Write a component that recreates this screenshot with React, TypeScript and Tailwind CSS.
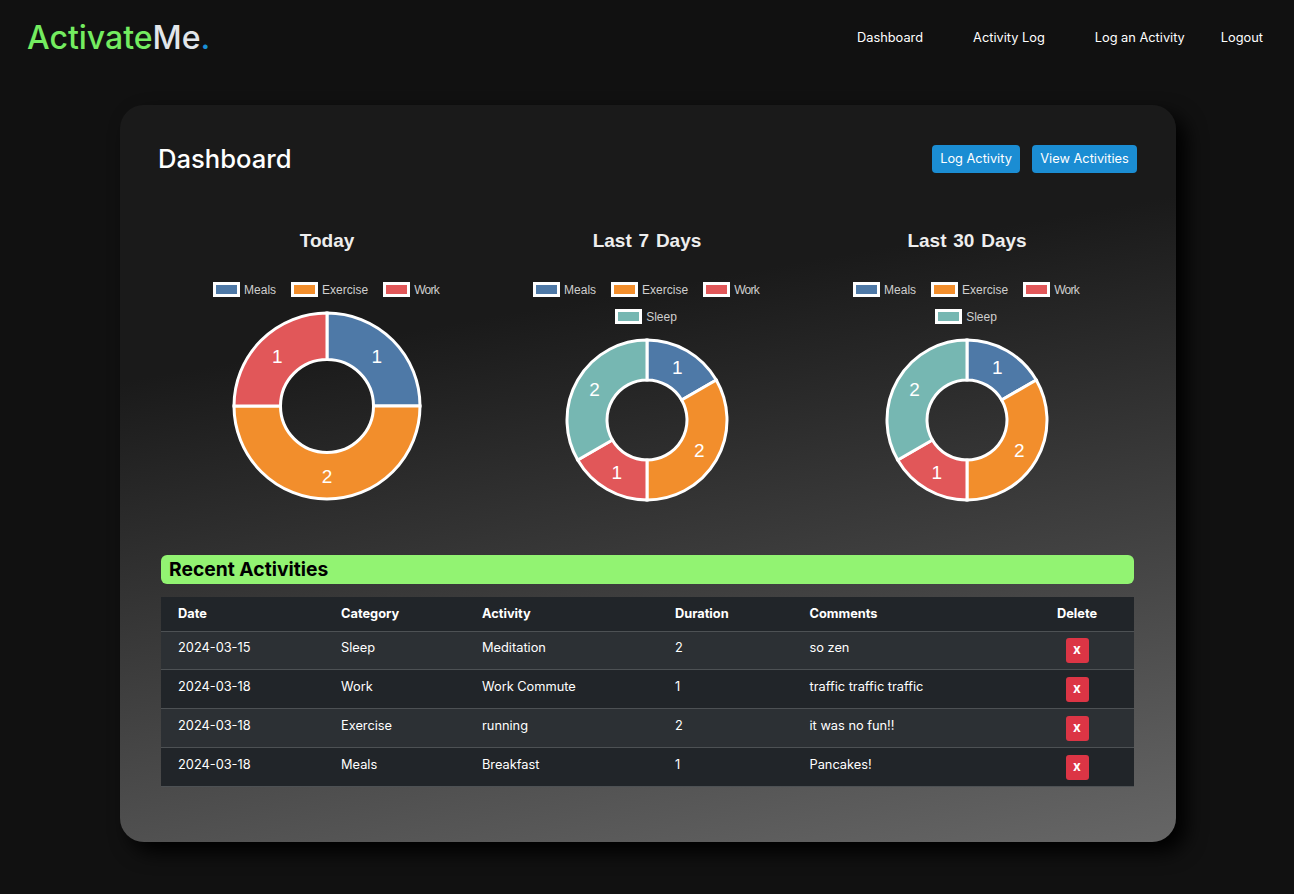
import React from 'react'

const colors: Record<string, string> = {
  Meals: '#4e79a7',
  Exercise: '#f28e2c',
  Work: '#e15759',
  Sleep: '#76b7b2',
}

type Slice = { name: string; value: number }

const charts: { title: string; size: number; slices: Slice[] }[] = [
  {
    title: 'Today',
    size: 190,
    slices: [
      { name: 'Meals', value: 1 },
      { name: 'Exercise', value: 2 },
      { name: 'Work', value: 1 },
    ],
  },
  {
    title: 'Last 7 Days',
    size: 164,
    slices: [
      { name: 'Meals', value: 1 },
      { name: 'Exercise', value: 2 },
      { name: 'Work', value: 1 },
      { name: 'Sleep', value: 2 },
    ],
  },
  {
    title: 'Last 30 Days',
    size: 164,
    slices: [
      { name: 'Meals', value: 1 },
      { name: 'Exercise', value: 2 },
      { name: 'Work', value: 1 },
      { name: 'Sleep', value: 2 },
    ],
  },
]

const rows = [
  { date: '2024-03-15', category: 'Sleep', activity: 'Meditation', duration: 2, comments: 'so zen' },
  { date: '2024-03-18', category: 'Work', activity: 'Work Commute', duration: 1, comments: 'traffic traffic traffic' },
  { date: '2024-03-18', category: 'Exercise', activity: 'running', duration: 2, comments: 'it was no fun!!' },
  { date: '2024-03-18', category: 'Meals', activity: 'Breakfast', duration: 1, comments: 'Pancakes!' },
]

function Donut({ size, slices }: { size: number; slices: Slice[] }) {
  const c = size / 2
  const outer = c - 2
  const inner = outer / 2
  const mid = (outer + inner) / 2 + 0.5
  const total = slices.reduce((sum, s) => sum + s.value, 0)
  const pt = (r: number, a: number) => [c + r * Math.sin(a), c - r * Math.cos(a)]
  let angle = 0

  return (
    <svg width={size} height={size} viewBox={`0 0 ${size} ${size}`}>
      {slices.map((s) => {
        const start = angle
        const end = angle + (s.value / total) * Math.PI * 2
        angle = end
        const large = end - start > Math.PI ? 1 : 0
        const [x1, y1] = pt(outer, start)
        const [x2, y2] = pt(outer, end)
        const [x3, y3] = pt(inner, end)
        const [x4, y4] = pt(inner, start)
        const [tx, ty] = pt(mid, (start + end) / 2)
        return (
          <g key={s.name}>
            <path
              d={`M${x1} ${y1}A${outer} ${outer} 0 ${large} 1 ${x2} ${y2}L${x3} ${y3}A${inner} ${inner} 0 ${large} 0 ${x4} ${y4}Z`}
              fill={colors[s.name]}
              stroke="#fff"
              strokeWidth={3}
            />
            <text x={tx} y={ty + 6.5} textAnchor="middle" fill="#fff" fontSize={19} fontFamily="Liberation Sans, Arial, sans-serif">
              {s.value}
            </text>
          </g>
        )
      })}
    </svg>
  )
}

function Legend({ slices }: { slices: Slice[] }) {
  return (
    <div className="flex flex-wrap justify-center gap-x-[15px] gap-y-3 w-[280px] mr-[2px]">
      {slices.map((s) => (
        <div key={s.name} className="flex items-center gap-1 h-[15px]">
          <svg width={27} height={15}>
            <rect x={1.5} y={1.5} width={24} height={12} fill={colors[s.name]} stroke="#fff" strokeWidth={3} />
          </svg>
          <span className={`text-xs leading-none text-[#cfcfcf] ${s.name === 'Work' ? 'tracking-[-0.75px]' : ''}`}>{s.name}</span>
        </div>
      ))}
    </div>
  )
}

export default function App() {
  return (
    <div className="min-h-screen bg-[#111111] font-['Inter',sans-serif] text-white">
      {/* Navbar */}
      <nav className="flex items-center justify-between h-[75px] pl-[27px] pr-[31px]">
        <div className="text-[32px] leading-none font-medium">
          <span className="text-[#74ec60]">Activate</span>
          <span className="text-[#e2e6ea]">Me</span>
          <span className="text-[#1a8fd6]">.</span>
        </div>
        <div className="flex items-center text-[12.8px]">
          <a className="mr-[50px]">Dashboard</a>
          <a className="mr-[50px]">Activity Log</a>
          <a className="mr-[36px]">Log an Activity</a>
          <a>Logout</a>
        </div>
      </nav>

      {/* Main card */}
      <main className="ml-[120px] mr-[118px] mt-[30px] h-[737px] rounded-3xl bg-[linear-gradient(170deg,#1a1a1a_30%,#666666_100%)] shadow-[10px_10px_20px_#000000] px-[38px] pt-10">
        <div className="flex items-center justify-between h-7">
          <h1 className="text-[25.6px] leading-7 font-medium">Dashboard</h1>
          <div className="flex gap-3 mr-px">
            <button className="w-[88px] h-7 rounded bg-[#1b8dd3] text-[12.8px]">Log Activity</button>
            <button className="w-[105px] h-7 rounded bg-[#1b8dd3] text-[12.8px]">View Activities</button>
          </div>
        </div>

        {/* Charts */}
        <div className="grid grid-cols-3 w-[960px] ml-[9px] mt-[55px] h-[297px] font-['Liberation_Sans',Arial,sans-serif]">
          {charts.map((chart) => (
            <div key={chart.title} className="flex flex-col items-center">
              <h2 className="text-[19px] leading-6 mt-px [word-spacing:1.5px] font-bold text-[#eeeeee]">{chart.title}</h2>
              <div className="mt-[29px]">
                <Legend slices={chart.slices} />
              </div>
              <div className="mt-[14px]">
                <Donut size={chart.size} slices={chart.slices} />
              </div>
            </div>
          ))}
        </div>

        {/* Recent activities */}
        <div className="ml-[3px] mr-[4px] mt-[30px]">
          <h2 className="h-[29px] rounded-md bg-[#92f372] pl-2 text-[19.3px] leading-[29px] font-bold text-black">Recent Activities</h2>
          <table className="w-full mt-[13px] table-fixed border-collapse text-[12.8px] text-left">
            <thead>
              <tr className="h-[34px] bg-[#212529] border-b border-[#4d5154]">
                <th className="w-[163px] pl-[17px] font-bold">Date</th>
                <th className="w-[141px] pl-[17px] font-bold">Category</th>
                <th className="w-[193px] pl-[17px] font-bold">Activity</th>
                <th className="w-[134.5px] pl-[17px] font-bold">Duration</th>
                <th className="w-[228.5px] pl-[17px] font-bold">Comments</th>
                <th className="font-bold text-center pr-[1px]">Delete</th>
              </tr>
            </thead>
            <tbody>
              {rows.map((row, i) => {
                const cell = i === 0 ? 'pl-[17px] pt-1.5 align-top' : 'pl-[17px] pt-[7px] align-top'
                return (
                  <tr key={i} className={`border-b border-[#4d5154] ${i === 0 ? 'h-[38px]' : 'h-[39px]'} ${i % 2 === 0 ? 'bg-[#2c3034]' : 'bg-[#212529]'}`}>
                    <td className={cell}>{row.date}</td>
                    <td className={cell}>{row.category}</td>
                    <td className={cell}>{row.activity}</td>
                    <td className={cell}>{row.duration}</td>
                    <td className={cell}>{row.comments}</td>
                    <td className={i === 0 ? 'pt-1.5 align-top pr-[1px]' : 'pt-[7px] align-top pr-[1px]'}>
                      <button className="block mx-auto w-[23px] h-[25px] pb-px rounded-[3px] bg-[#dc3545] text-[13.5px] font-bold leading-none">x</button>
                    </td>
                  </tr>
                )
              })}
            </tbody>
          </table>
        </div>
      </main>
    </div>
  )
}
